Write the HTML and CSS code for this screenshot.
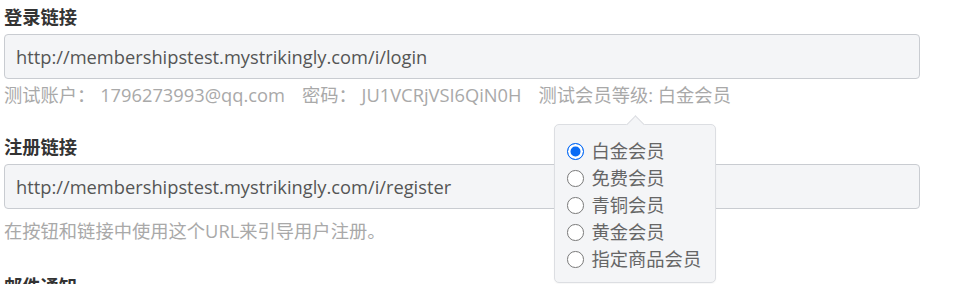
FILE: index.html
```html
<!DOCTYPE html>
<html lang="zh-CN">
<head>
<meta charset="utf-8">
<link rel="stylesheet" href="styles.css">
</head>
<body>
<div class="page">
  <section class="field">
    <div class="label">登录链接</div>
    <div class="input">http://membershipstest.mystrikingly.com/i/login</div>
    <div class="hint">测试账户： 1796273993@qq.com<span class="sep"></span>密码： JU1VCRjVSI6QiN0H<span class="sep"></span>测试会员等级: 白金会员</div>
  </section>
  <section class="field field-wide">
    <div class="label">注册链接</div>
    <div class="input">http://membershipstest.mystrikingly.com/i/register</div>
    <div class="hint hint-spaced">在按钮和链接中使用这个URL来引导用户注册。</div>
  </section>
  <section class="field">
    <div class="label">邮件通知</div>
  </section>

  <div class="popover">
    <div class="option"><span class="radio checked"></span><span>白金会员</span></div>
    <div class="option"><span class="radio"></span><span>免费会员</span></div>
    <div class="option"><span class="radio"></span><span>青铜会员</span></div>
    <div class="option"><span class="radio"></span><span>黄金会员</span></div>
    <div class="option"><span class="radio"></span><span>指定商品会员</span></div>
  </div>
</div>
</body>
</html>
```
FILE: styles.css
```css
html, body {
  margin: 0;
  padding: 0;
  background: #fff;
}
body {
  font-family: "Open Sans", "Noto Sans CJK SC", sans-serif;
  font-size: 18.3px;
  line-height: 27px;
  height: 284px;
  overflow: hidden;
}
.page {
  position: relative;
  width: 916px;
  padding: 3px 0 0 4px;
}
.field {
  display: flex;
  flex-direction: column;
  margin-bottom: 25px;
}
.field-wide {
  margin-bottom: 28px;
}
.label {
  font-weight: bold;
  color: #333;
}
.input {
  margin-top: 4px;
  height: 43px;
  box-sizing: content-box;
  border: 1px solid #c9ccd1;
  border-radius: 4px;
  background: #f4f5f7;
  color: #555;
  padding: 0 11px;
  display: flex;
  align-items: center;
}
.hint {
  margin-top: 2px;
  color: #a9a9a9;
}
.hint-spaced {
  margin-top: 8px;
}
.sep {
  display: inline-block;
  width: 17px;
}
.popover {
  position: absolute;
  left: 554px;
  top: 124px;
  width: 136px;
  padding: 12px 12px 10px 12px;
  background: #f4f5f7;
  border: 1px solid #dcdee2;
  border-radius: 5px;
  box-shadow: 0 1px 2px rgba(0,0,0,0.04);
}
.popover::before {
  content: "";
  position: absolute;
  left: 74px;
  top: -7px;
  width: 12px;
  height: 12px;
  background: #f4f5f7;
  border-top: 1px solid #dcdee2;
  border-left: 1px solid #dcdee2;
  transform: rotate(45deg);
}
.option {
  display: flex;
  align-items: center;
  gap: 8px;
  color: #666;
  height: 27px;
  white-space: nowrap;
}
.radio {
  width: 14.5px;
  height: 14.5px;
  border: 1.2px solid #7a7a7a;
  border-radius: 50%;
  background: #fff;
  box-sizing: content-box;
  flex: none;
  position: relative;
  top: 1px;
}
.radio.checked {
  border-color: #0a6cf5;
  background: #0a6cf5;
  box-shadow: inset 0 0 0 2.5px #fff;
}
```
